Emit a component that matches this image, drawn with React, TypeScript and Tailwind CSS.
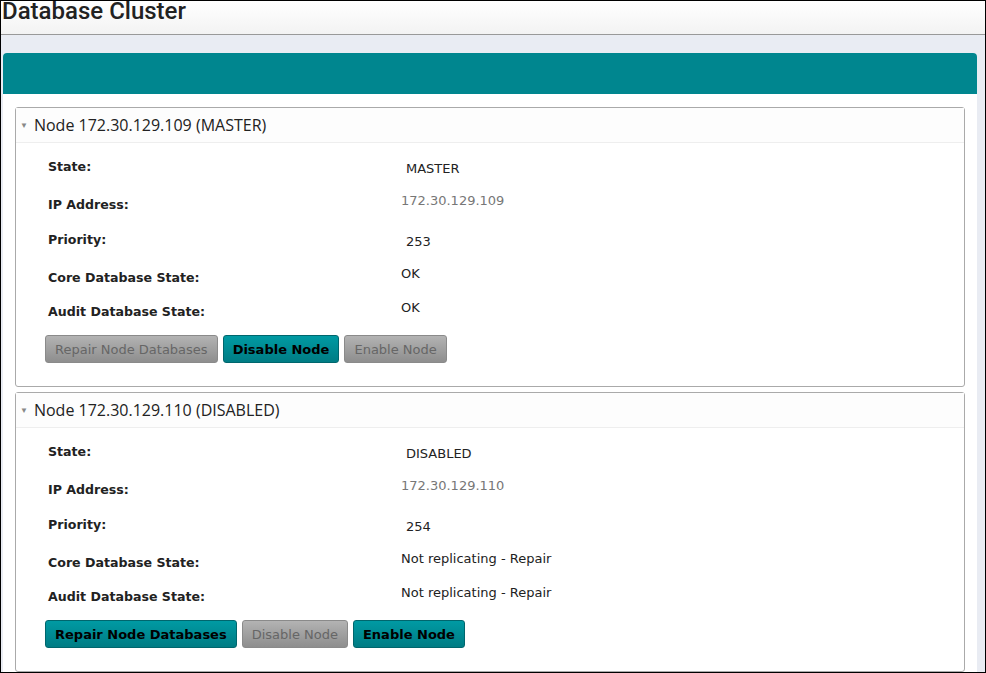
type Row = { label: string; value: string; muted?: boolean; boxed?: boolean };

type Node = {
  title: string;
  rows: Row[];
  repair: boolean;
  disable: boolean;
  enable: boolean;
};

const nodes: Node[] = [
  {
    title: 'Node 172.30.129.109 (MASTER)',
    rows: [
      { label: 'State:', value: 'MASTER', boxed: true },
      { label: 'IP Address:', value: '172.30.129.109', muted: true },
      { label: 'Priority:', value: '253', boxed: true },
      { label: 'Core Database State:', value: 'OK' },
      { label: 'Audit Database State:', value: 'OK' },
    ],
    repair: false,
    disable: true,
    enable: false,
  },
  {
    title: 'Node 172.30.129.110 (DISABLED)',
    rows: [
      { label: 'State:', value: 'DISABLED', boxed: true },
      { label: 'IP Address:', value: '172.30.129.110', muted: true },
      { label: 'Priority:', value: '254', boxed: true },
      { label: 'Core Database State:', value: 'Not replicating - Repair' },
      { label: 'Audit Database State:', value: 'Not replicating - Repair' },
    ],
    repair: true,
    disable: false,
    enable: true,
  },
];

const rowHeights = ['h-[38px]', 'h-[35px]', 'h-[38px]', 'h-[34px]', 'h-[34px]'];

function ActionButton({ label, active }: { label: string; active: boolean }) {
  return (
    <button
      type="button"
      className={`h-[28px] rounded-[3px] border text-[13px] leading-none ${
        active
          ? 'border-[#00666d] bg-gradient-to-b from-[#009aa3] to-[#007c84] px-[9px] font-bold text-black'
          : 'border-[#8a8a8a] bg-gradient-to-b from-[#b3b3b3] to-[#8e8e8e] px-[9px] text-[#666]'
      }`}
      style={{ fontFamily: 'Tahoma, "DejaVu Sans", sans-serif' }}
    >
      {label}
    </button>
  );
}

function NodeCard({ node }: { node: Node }) {
  return (
    <div className="rounded-[3px] border border-[#aaa] bg-white">
      <div className="flex h-[35px] items-center gap-[6px] border-b border-[#eee] bg-[#fdfdfd] pl-[4px]">
        <span className="text-[8px] text-[#888]">▼</span>
        <span className="text-[16px] text-[#222]" style={{ fontFamily: '"Open Sans", "Noto Sans", sans-serif' }}>
          {node.title}
        </span>
      </div>
      <div className="px-[32px] pt-[12px] pb-[23px]">
        {node.rows.map((row, i) => (
          <div key={row.label} className={`flex items-start ${rowHeights[i]}`}>
            <div
              className="w-[353px] pt-[4px] text-[12.6px] font-bold leading-[16px] text-[#222]"
              style={{ fontFamily: 'Verdana, "DejaVu Sans", sans-serif' }}
            >
              {row.label}
            </div>
            <div
              className={`text-[13px] leading-[16px] ${row.muted ? 'text-[#777]' : 'text-[#222]'} ${
                row.boxed ? 'pl-[5px] pt-[6px]' : 'pt-[0px]'
              }`}
              style={{ fontFamily: 'Tahoma, "DejaVu Sans", sans-serif' }}
            >
              {row.value}
            </div>
          </div>
        ))}
        <div className="-ml-[3px] mt-[1px] flex gap-[5px]">
          <ActionButton label="Repair Node Databases" active={node.repair} />
          <ActionButton label="Disable Node" active={node.disable} />
          <ActionButton label="Enable Node" active={node.enable} />
        </div>
      </div>
    </div>
  );
}

export default function App() {
  return (
    <div className="flex h-[673px] w-[986px] flex-col overflow-hidden border border-black bg-[#e9ecf3]">
      <div className="h-[34px] shrink-0 border-b border-[#999] bg-gradient-to-b from-white to-[#f3f3f3]">
        <h1
          className="-mt-[5px] pl-[1px] text-[24px] font-medium leading-[30px] text-[#222]"
          style={{ fontFamily: 'Roboto, sans-serif' }}
        >
          Database Cluster
        </h1>
      </div>
      <div className="ml-[2px] mr-[8px] mt-[18px] flex-1 rounded-t-[4px] bg-white">
        <div className="h-[41px] rounded-t-[4px] bg-[#00868f]" />
        <div className="flex flex-col gap-[5px] px-[12px] pt-[13px]">
          {nodes.map((node) => (
            <NodeCard key={node.title} node={node} />
          ))}
        </div>
      </div>
    </div>
  );
}
